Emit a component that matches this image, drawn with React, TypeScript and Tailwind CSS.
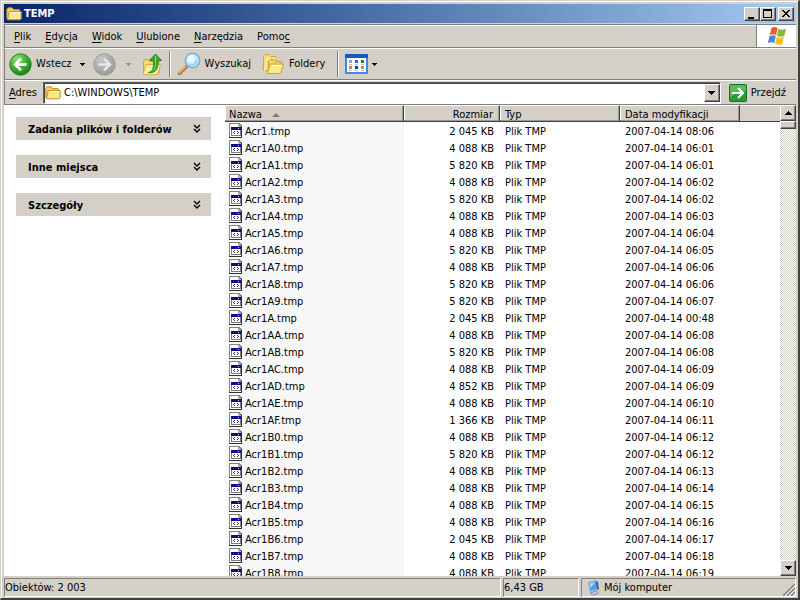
import React from "react";

type FileRow = { name: string; size: string; date: string };

const files: FileRow[] = [
  ["Acr1.tmp", "2 045", "08:06"],
  ["Acr1A0.tmp", "4 088", "06:01"],
  ["Acr1A1.tmp", "5 820", "06:01"],
  ["Acr1A2.tmp", "4 088", "06:02"],
  ["Acr1A3.tmp", "5 820", "06:02"],
  ["Acr1A4.tmp", "4 088", "06:03"],
  ["Acr1A5.tmp", "4 088", "06:04"],
  ["Acr1A6.tmp", "5 820", "06:05"],
  ["Acr1A7.tmp", "4 088", "06:06"],
  ["Acr1A8.tmp", "5 820", "06:06"],
  ["Acr1A9.tmp", "5 820", "06:07"],
  ["Acr1A.tmp", "2 045", "00:48"],
  ["Acr1AA.tmp", "4 088", "06:08"],
  ["Acr1AB.tmp", "5 820", "06:08"],
  ["Acr1AC.tmp", "4 088", "06:09"],
  ["Acr1AD.tmp", "4 852", "06:09"],
  ["Acr1AE.tmp", "4 088", "06:10"],
  ["Acr1AF.tmp", "1 366", "06:11"],
  ["Acr1B0.tmp", "4 088", "06:12"],
  ["Acr1B1.tmp", "5 820", "06:12"],
  ["Acr1B2.tmp", "4 088", "06:13"],
  ["Acr1B3.tmp", "4 088", "06:14"],
  ["Acr1B4.tmp", "4 088", "06:15"],
  ["Acr1B5.tmp", "4 088", "06:16"],
  ["Acr1B6.tmp", "2 045", "06:17"],
  ["Acr1B7.tmp", "4 088", "06:18"],
  ["Acr1B8.tmp", "4 088", "06:19"],
].map(([name, size, time]) => ({ name, size: size + " KB", date: "2007-04-14 " + time }));

function FolderIcon() {
  return (
    <svg viewBox="0 0 16 16" className="size-4 shrink-0" aria-hidden="true">
      <path d="M.8 12.500V3.200L2 1.800h4.200L7.600 3.500h5.600L13.800 5v7.500Z" fill="#f3cd5e" stroke="#b98d2a" />
      <path d="M1.500 13.800L3 6.200L4 5.500h11.200v7L14.200 13.800Z" fill="#fbe48a" stroke="#c0922c" />
      <path d="M4 6.500h10.200" stroke="#fffbdc" />
    </svg>
  );
}

function FoldersIcon() {
  return (
    <svg viewBox="0 0 24 24" className="size-6 shrink-0" aria-hidden="true">
      <path d="M2.500 18.500V4L4 2.500h4l2 2h5V18.500Z" fill="#f8da74" stroke="#d6a63a" />
      <path d="M3.500 19L5.500 7h10" fill="none" stroke="#fff3b8" />
      <path d="M7.500 21V9L9 7.500h4l2 2h5.500V13" fill="#f5d264" stroke="#d0a034" />
      <path d="M6 21.500L9.500 12H22.500L19.500 21.500Z" fill="#fde88a" stroke="#d0a034" />
      <path d="M10.500 13.500h10" stroke="#fffbd6" />
    </svg>
  );
}

function RoundArrow({ forward }: { forward?: boolean }) {
  return (
    <svg viewBox="0 0 24 24" className="size-[23px] shrink-0" aria-hidden="true">
      <defs>
        <radialGradient id={forward ? "disc-f" : "disc-b"} cx="35%" cy="25%" r="85%">
          <stop offset="0" stopColor={forward ? "#c8c8c8" : "#8ee07c"} />
          <stop offset=".55" stopColor={forward ? "#acacac" : "#35ad2d"} />
          <stop offset="1" stopColor={forward ? "#989898" : "#12780e"} />
        </radialGradient>
      </defs>
      <circle cx="12" cy="12" r="11.2" fill={forward ? "url(#disc-f)" : "url(#disc-b)"} stroke={forward ? "#999" : "#22851d"} />
      <path
        d={forward ? "M5.500 12H17M11.500 6l6 6-6 6" : "M18.500 12H7M12.500 6l-6 6 6 6"}
        fill="none"
        stroke={forward ? "#e6e6e6" : "#fff"}
        strokeWidth="2.800"
      />
    </svg>
  );
}

function UpFolderIcon() {
  return (
    <svg viewBox="0 0 24 24" className="size-6 shrink-0" aria-hidden="true">
      <path d="M2.500 21V9.500l1.500-2h4l1.500 2H18V21Z" fill="#f6d76c" stroke="#d0a43c" />
      <path d="M2 22.500L5 12.500H19.500L16.500 22.500Z" fill="#fdee9c" stroke="#d6b04a" />
      <path d="M7.500 20.500c4-.5 5.500-4 5-12H8.500L14.500 2l6 6.500H17c.6 8-2.500 13-9.500 12Z" fill="#38aa30" stroke="#1d8a1b" />
      <path d="M14.500 4v6c.3 4-.8 7-3 8.500" fill="none" stroke="#7ed972" />
    </svg>
  );
}

function SearchIcon() {
  return (
    <svg viewBox="0 0 24 24" className="size-6 shrink-0" aria-hidden="true">
      <path d="M2.500 21.500L9.500 14.500" stroke="#b07848" strokeWidth="3.500" strokeLinecap="round" />
      <path d="M2.500 20.500L9 14" stroke="#eab98a" strokeWidth="1.500" strokeLinecap="round" />
      <circle cx="15.500" cy="8.500" r="7.200" fill="#bfe6fb" stroke="#86a8d2" strokeWidth="1.500" />
      <circle cx="14" cy="7" r="4" fill="#e4f6ff" />
      <path d="M11.500 8a4 4 0 0 1 5-3.500c1 .5-3.500 1-5 3.500Z" fill="#fff" />
      <path d="M12 12.500c3 2 7 0 8-4" fill="none" stroke="#95d0f3" strokeWidth="1.500" />
    </svg>
  );
}

function ViewsIcon() {
  return (
    <svg viewBox="0 0 23 20" className="h-5 w-[23px] shrink-0" aria-hidden="true">
      <rect x="1" y="1" width="21" height="18" fill="#fff" stroke="#3c8ae4" strokeWidth="2" />
      <rect x="0" y="0" width="23" height="4" rx="1" fill="#1559bd" />
      <rect x="4" y="6" width="3" height="3" fill="#9aa0cc" />
      <rect x="10" y="6" width="3" height="3" fill="#2868d0" />
      <rect x="16" y="6" width="3" height="3" fill="#148a22" />
      <rect x="4" y="12" width="3" height="3" fill="#e87430" />
      <rect x="10" y="12" width="3" height="3" fill="#123c9c" />
      <rect x="16" y="12" width="3" height="3" fill="#c29018" />
      <path d="M4 10.500h3M10 10.500h3M16 10.500h3M4 16.500h3M10 16.500h3M16 16.500h3" stroke="#b9c2d0" />
    </svg>
  );
}

function WindowsFlag() {
  return (
    <svg viewBox="0 0 20 20" className="size-5" aria-hidden="true">
      <path d="M4.500 2C7 .6 8.800 1 10.600 2.200L9 9.200C7.200 8 5.400 7.900 2.800 9.100Z" fill="#ea5c26" />
      <path d="M11.500 2.700C14 4 16.200 3.900 19 2.800L17.300 9.900C14.700 11 12.300 10.900 9.900 9.700Z" fill="#7fbb3c" />
      <path d="M2.500 10.200C5 9 7 9.100 8.800 10.300L7.200 17.200C5.400 16 3.400 15.900.8 17Z" fill="#4a86dc" />
      <path d="M9.700 10.800C12 12.100 14.400 12.100 17 11L15.400 18C12.800 19.200 10.400 19.100 8 17.800Z" fill="#fac125" />
    </svg>
  );
}

function TmpFileIcon() {
  return (
    <svg viewBox="0 0 14 16" className="h-4 w-3.5 shrink-0" shapeRendering="crispEdges" aria-hidden="true">
      <path d="M0 0H10L13 3V15H0Z" fill="#848484" />
      <path d="M12 3h1v12H0v-1H12Z" fill="#303030" />
      <path d="M1 1H9V4H12V14H1Z" fill="#fff" />
      <path d="M9 1l3 3H9Z" fill="#b4b4b4" />
      <rect x="2" y="4" width="10" height="9" fill="#7c7c7c" />
      <rect x="3" y="5" width="8" height="7" fill="#fff" />
      <rect x="2" y="4" width="10" height="3" fill="#0c0c8c" />
      <path d="M9 5h1v1H9z" fill="#d8d8f8" />
      <path d="M4 9h1v1H4zM5 8h1v1H5zM5 10h1v1H5zM8 8h1v1H8zM8 10h1v1H8zM9 9h1v1H9z" fill="#34346c" />
    </svg>
  );
}

function ComputerIcon() {
  return (
    <svg viewBox="0 0 16 16" className="size-4 shrink-0" aria-hidden="true">
      <path d="M2.500 2.500L9.500.8 11 9.500 4 11.500Z" fill="#4ba4ee" stroke="#8fb5dc" />
      <path d="M3.500 3.300l5-1.100L5 8Z" fill="#a9dcff" />
      <path d="M9.500.8L12 2l.8 7.500L11 9.500Z" fill="#3157a8" />
      <path d="M4 13l6.500-2 2 1.800-5.500 2.500Z" fill="#c9cfe6" stroke="#8289b4" />
    </svg>
  );
}

function Caret({ className }: { className: string }) {
  return (
    <svg viewBox="0 0 7 4" className={"h-1 w-[7px] shrink-0 " + className} shapeRendering="crispEdges" aria-hidden="true">
      <path d="M0 0h7v1H6v1H5v1H4v1H3V3H2V2H1V1H0Z" fill="currentColor" />
    </svg>
  );
}

function SmallCaret({ className }: { className: string }) {
  return (
    <svg viewBox="0 0 5 3" className={"h-[3px] w-[5px] shrink-0 " + className} shapeRendering="crispEdges" aria-hidden="true">
      <path d="M0 0h5v1H4v1H3v1H2V2H1V1H0Z" fill="currentColor" />
    </svg>
  );
}

const raised =
  "flex items-center justify-center border border-t-white border-l-white border-r-[#404040] border-b-[#404040] bg-[#d4d0c8] shadow-[inset_-1px_-1px_0_#808080]";

function CaptionButton({ label, children }: { label: string; children: React.ReactNode }) {
  return (
    <button aria-label={label} className={raised + " h-3.5 w-4"}>
      <svg viewBox="0 0 12 12" className="size-3 shrink-0" shapeRendering="crispEdges" aria-hidden="true">
        {children}
      </svg>
    </button>
  );
}

function Key({ children }: { children: string }) {
  return <span className="underline underline-offset-2">{children}</span>;
}

function MenuItem({ children }: { children: React.ReactNode }) {
  return <button className="px-[7px]">{children}</button>;
}

function Divider() {
  return <div className="h-[26px] w-0.5 border-l border-[#808080] bg-white" />;
}

function TaskPanel({ title }: { title: string }) {
  return (
    <button className="flex h-[23px] w-full items-center justify-between bg-[#d4d0c8] pr-2.5 pl-3 font-bold">
      <span className="pt-0.5">{title}</span>
      <svg viewBox="0 0 8 9" className="h-[9px] w-2" aria-hidden="true">
        <path d="M1 1l3 3 3-3M1 5l3 3 3-3" fill="none" stroke="#000" strokeWidth="1.400" />
      </svg>
    </button>
  );
}

const heading =
  "border-t border-r border-b border-t-white border-r-[#404040] border-b-[#404040] px-0 pt-0.5 pb-0 font-normal shadow-[inset_-1px_-1px_0_#9a978f,inset_1px_0_0_#fff]";

export default function App() {
  return (
    <div className="flex h-screen flex-col border-t border-l border-r-2 border-b-2 border-t-[#d4d0c8] border-l-[#d4d0c8] border-r-[#404040] border-b-[#404040] bg-[#d4d0c8] font-['DejaVu_Sans_Condensed','DejaVu_Sans',sans-serif] text-[11px] leading-4 text-black">
      <div className="flex min-h-0 flex-1 flex-col border-t border-l border-white p-0.5 pb-0">
        <header className="flex h-[19px] shrink-0 items-center bg-linear-to-r from-[#0a246a] to-[#a6caf0] px-0.5">
          <FolderIcon />
          <h1 className="ml-0.5 flex-1 font-bold text-white">TEMP</h1>
          <CaptionButton label="Minimalizuj">
            <path d="M2 9h6v2H2z" />
          </CaptionButton>
          <CaptionButton label="Maksymalizuj">
            <path d="M1 1h9v9H1zM2 3v6h7V3z" fillRule="evenodd" />
          </CaptionButton>
          <div className="w-0.5" />
          <CaptionButton label="Zamknij">
            <path d="M2 2h2v1h1v1h2V3h1V2h2v1H9v1H8v1H7v1h1v1h1v1h1v1H8V8H7V7H5v1H4v1H2V8h1V7h1V6h1V5H4V4H3V3H2z" />
          </CaptionButton>
        </header>

        <nav className="mt-px flex h-6 shrink-0 border-t border-l border-[#808080]">
          <div className="flex flex-1 items-center border-t border-b border-t-white border-b-[#808080] pl-0.5">
            <MenuItem><Key>P</Key>lik</MenuItem>
            <MenuItem><Key>E</Key>dycja</MenuItem>
            <MenuItem><Key>W</Key>idok</MenuItem>
            <MenuItem><Key>U</Key>lubione</MenuItem>
            <MenuItem><Key>N</Key>arzędzia</MenuItem>
            <MenuItem>Pomo<Key>c</Key></MenuItem>
          </div>
          <div className="flex w-10 items-center justify-center border-b border-l border-[#808080] bg-white">
            <WindowsFlag />
          </div>
        </nav>

        <div className="flex h-8 shrink-0 items-center border-t border-b border-l border-t-white border-b-[#808080] border-l-[#808080] pl-1">
          <button className="flex items-center gap-1"><RoundArrow /> Wstecz</button>
          <button aria-label="Historia wstecz" className="pr-2 pl-2"><SmallCaret className="text-black" /></button>
          <button aria-label="Dalej"><RoundArrow forward /></button>
          <button aria-label="Historia dalej" className="px-2.5"><SmallCaret className="text-[#909090]" /></button>
          <button aria-label="W górę"><UpFolderIcon /></button>
          <div className="w-1" />
          <Divider />
          <button className="ml-1.5 flex items-center gap-1"><SearchIcon /> Wyszukaj</button>
          <button className="ml-2.5 flex items-center gap-1"><FoldersIcon /> Foldery</button>
          <div className="w-3" />
          <Divider />
          <button aria-label="Widoki" className="ml-1.5 flex items-center gap-1"><ViewsIcon /><SmallCaret className="text-black" /></button>
        </div>

        <form className="flex h-[25px] shrink-0 items-center border-t border-b border-l border-t-white border-b-[#808080] border-l-[#808080] pl-1">
          <label htmlFor="address" className="w-[34px]"><Key>A</Key>dres</label>
          <div className="flex h-[22px] flex-1 items-center border border-t-[#606060] border-r-white border-b-white border-l-[#606060] bg-white pl-px shadow-[inset_1px_1px_0_#404040]">
            <FolderIcon />
            <input id="address" defaultValue="C:\WINDOWS\TEMP" className="ml-[3px] min-w-0 flex-1 outline-none" />
            <button type="button" aria-label="Lista adresów" className={raised + " h-[18px] w-4"}><Caret className="text-black" /></button>
          </div>
          <button type="button" className="mr-2.5 ml-2 flex items-center gap-1">
            <svg viewBox="0 0 18 18" className="size-[18px]" aria-hidden="true">
              <rect x=".5" y=".5" width="17" height="17" rx="1" fill="#299a36" stroke="#157020" />
              <path d="M1 1h16v6Q8 7 1 14Z" fill="#58b85c" />
              <path d="M3 9h11M9 4l5 5-5 5" fill="none" stroke="#fff" strokeWidth="2" />
            </svg>
            Przejdź
          </button>
        </form>

        <main className="flex min-h-0 flex-1 bg-white">
          <aside className="flex w-[221px] shrink-0 flex-col gap-[15px] py-3 pr-3.5 pl-3">
            <TaskPanel title="Zadania plików i folderów" />
            <TaskPanel title="Inne miejsca" />
            <TaskPanel title="Szczegóły" />
          </aside>
          <div className="min-w-0 flex-1 overflow-hidden">
            <table className="w-full table-fixed border-separate border-spacing-0">
              <colgroup>
                <col className="w-[179px]" />
                <col className="w-24" />
                <col className="w-[120px]" />
                <col className="w-[120px]" />
                <col />
              </colgroup>
              <thead className="bg-[#d4d0c8]">
                <tr className="h-[17px] leading-[13px]">
                  <th className={heading + " pl-1 text-left"}>
                    <span className="flex items-center gap-2.5">
                      Nazwa
                      <svg viewBox="0 0 8 4" className="h-1 w-2" aria-hidden="true"><path d="M0 4L4 0l4 4Z" fill="#808080" /></svg>
                    </span>
                  </th>
                  <th className={heading + " pr-1.5 text-right"}>Rozmiar</th>
                  <th className={heading + " pl-[5px] text-left"}>Typ</th>
                  <th className={heading + " pl-[5px] text-left"}>Data modyfikacji</th>
                  <td className="border-t border-b border-t-white border-b-[#404040]" />
                </tr>
              </thead>
              <tbody>
                {files.map((f) => (
                  <tr key={f.name} className="h-[17px] leading-[15px]">
                    <td className="bg-[#f7f7f7] p-0 pl-1">
                      <span className="flex h-[17px] items-center gap-0.5">
                        <TmpFileIcon />
                        <span className="pt-0.5">{f.name}</span>
                      </span>
                    </td>
                    <td className="px-0 pt-0.5 pr-1.5 pb-0 text-right">{f.size}</td>
                    <td className="px-0 pt-0.5 pb-0 pl-[5px]">Plik TMP</td>
                    <td className="px-0 pt-0.5 pb-0 pl-[5px]">{f.date}</td>
                    <td />
                  </tr>
                ))}
              </tbody>
            </table>
          </div>
          <div className="flex w-4 shrink-0 flex-col bg-[repeating-conic-gradient(#d4d0c8_0_25%,#fff_0_50%)] bg-size-[2px_2px]">
            <button aria-label="Przewiń w górę" className={raised + " h-4"}><Caret className="rotate-180 text-black" /></button>
            <div className={raised + " h-2"} />
            <div className="flex-1" />
            <button aria-label="Przewiń w dół" className={raised + " h-4"}><Caret className="text-black" /></button>
          </div>
        </main>

        <footer className="flex h-[22px] shrink-0 gap-0.5 pt-0.5 pb-px">
          <div className="flex flex-1 items-center border border-t-[#808080] border-r-white border-b-white border-l-[#808080]">Obiektów: 2 003</div>
          <div className="flex w-[76px] items-center border border-t-[#808080] border-r-white border-b-white border-l-[#808080]">6,43 GB</div>
          <div className="flex w-[215px] items-center gap-0.5 border border-t-[#808080] border-r-white border-b-white border-l-[#808080] pl-1">
            <ComputerIcon />
            <span className="flex-1">Mój komputer</span>
            <svg viewBox="0 0 12 12" className="size-3 self-end" aria-hidden="true">
              <path d="M0 12L12 0M4 12l8-8M8 12l4-4" stroke="#808080" strokeWidth="1.500" />
              <path d="M2 12L12 2M6 12l6-6M10 12l2-2" stroke="#fff" />
            </svg>
          </div>
        </footer>
      </div>
    </div>
  );
}
